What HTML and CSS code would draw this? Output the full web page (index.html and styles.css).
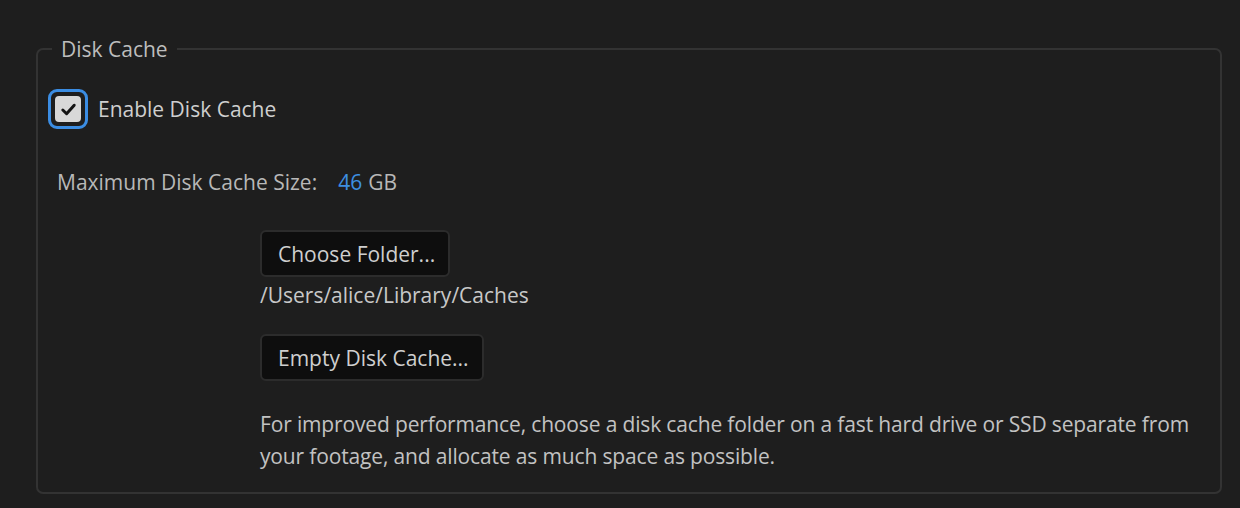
FILE: index.html
```html
<!DOCTYPE html>
<html>
<head>
<meta charset="utf-8">
<link rel="stylesheet" href="styles.css">
</head>
<body>
<div class="page">
  <fieldset class="group">
    <legend class="group-title">Disk Cache</legend>
    <label class="check-row">
      <span class="cb-ring"><span class="cb"><svg viewBox="0 0 16 16" width="19" height="19"><path d="M3.2 8.4 L6.4 11.6 L12.8 4.4" fill="none" stroke="#141414" stroke-width="2.5" stroke-linecap="round" stroke-linejoin="round"/></svg></span></span>
      <span class="check-label">Enable Disk Cache</span>
    </label>
    <div class="size-row">
      <span class="size-label">Maximum Disk Cache Size:</span>
      <span class="size-value">46</span>
      <span class="size-unit">GB</span>
    </div>
    <div class="actions">
      <button class="btn">Choose Folder...</button>
      <div class="path">/Users/alice/Library/Caches</div>
      <button class="btn btn-empty">Empty Disk Cache...</button>
      <p class="help">For improved performance, choose a disk cache folder on a fast hard drive or SSD separate from your footage, and allocate as much space as possible.</p>
    </div>
  </fieldset>
</div>
</body>
</html>
```

FILE: styles.css
```css
* { box-sizing: border-box; }
html, body { margin: 0; padding: 0; }
body {
  background: #1e1e1e;
  font-family: "Open Sans", "Noto Sans", sans-serif;
  color: #c8c8c8;
  width: 1240px;
  height: 508px;
  overflow: hidden;
}
.page {
  padding: 37px 18px 0 36px;
}
.group {
  margin: 0;
  border: 2px solid #333333;
  border-radius: 7px;
  padding: 0;
  height: 457px;
  min-width: 0;
}
.group-title {
  margin-left: 14px;
  padding: 0 9px;
  font-size: 21px;
  line-height: 24px;
  color: #bdbdbd;
}
.check-row {
  display: flex;
  align-items: center;
  margin: 28px 0 0 10px;
}
.cb-ring {
  flex: none;
  width: 40px;
  height: 40px;
  border: 3px solid #3b8de3;
  border-radius: 9px;
  padding: 4px;
  display: flex;
}
.cb {
  flex: 1;
  background: #d8d8d8;
  border-radius: 4px;
  display: flex;
  align-items: center;
  justify-content: center;
}
.check-label {
  margin-left: 10px;
  font-size: 21px;
  color: #cfcfcf;
}
.size-row {
  margin: 40px 0 0 19px;
  font-size: 21px;
  line-height: 26px;
  color: #b8b8b8;
  display: flex;
}
.size-value {
  color: #3d8fe1;
  margin-left: 21px;
}
.size-unit {
  margin-left: 6px;
}
.actions {
  margin: 35px 0 0 222px;
  display: flex;
  flex-direction: column;
  align-items: flex-start;
}
.btn {
  font-family: inherit;
  font-size: 21px;
  color: #cfcfcf;
  background: #0e0e0e;
  border: 2px solid #2c2c2c;
  border-radius: 6px;
  height: 47px;
  padding: 0 13px 0 16px;
  cursor: pointer;
}
.path {
  margin-top: 5px;
  font-size: 21px;
  line-height: 26px;
  color: #c8c8c8;
}
.btn-empty {
  margin-top: 26px;
}
.help {
  margin: 27px 0 0 0;
  font-size: 21px;
  line-height: 32px;
  letter-spacing: -0.15px;
  color: #c2c2c2;
  width: 955px;
}
```
